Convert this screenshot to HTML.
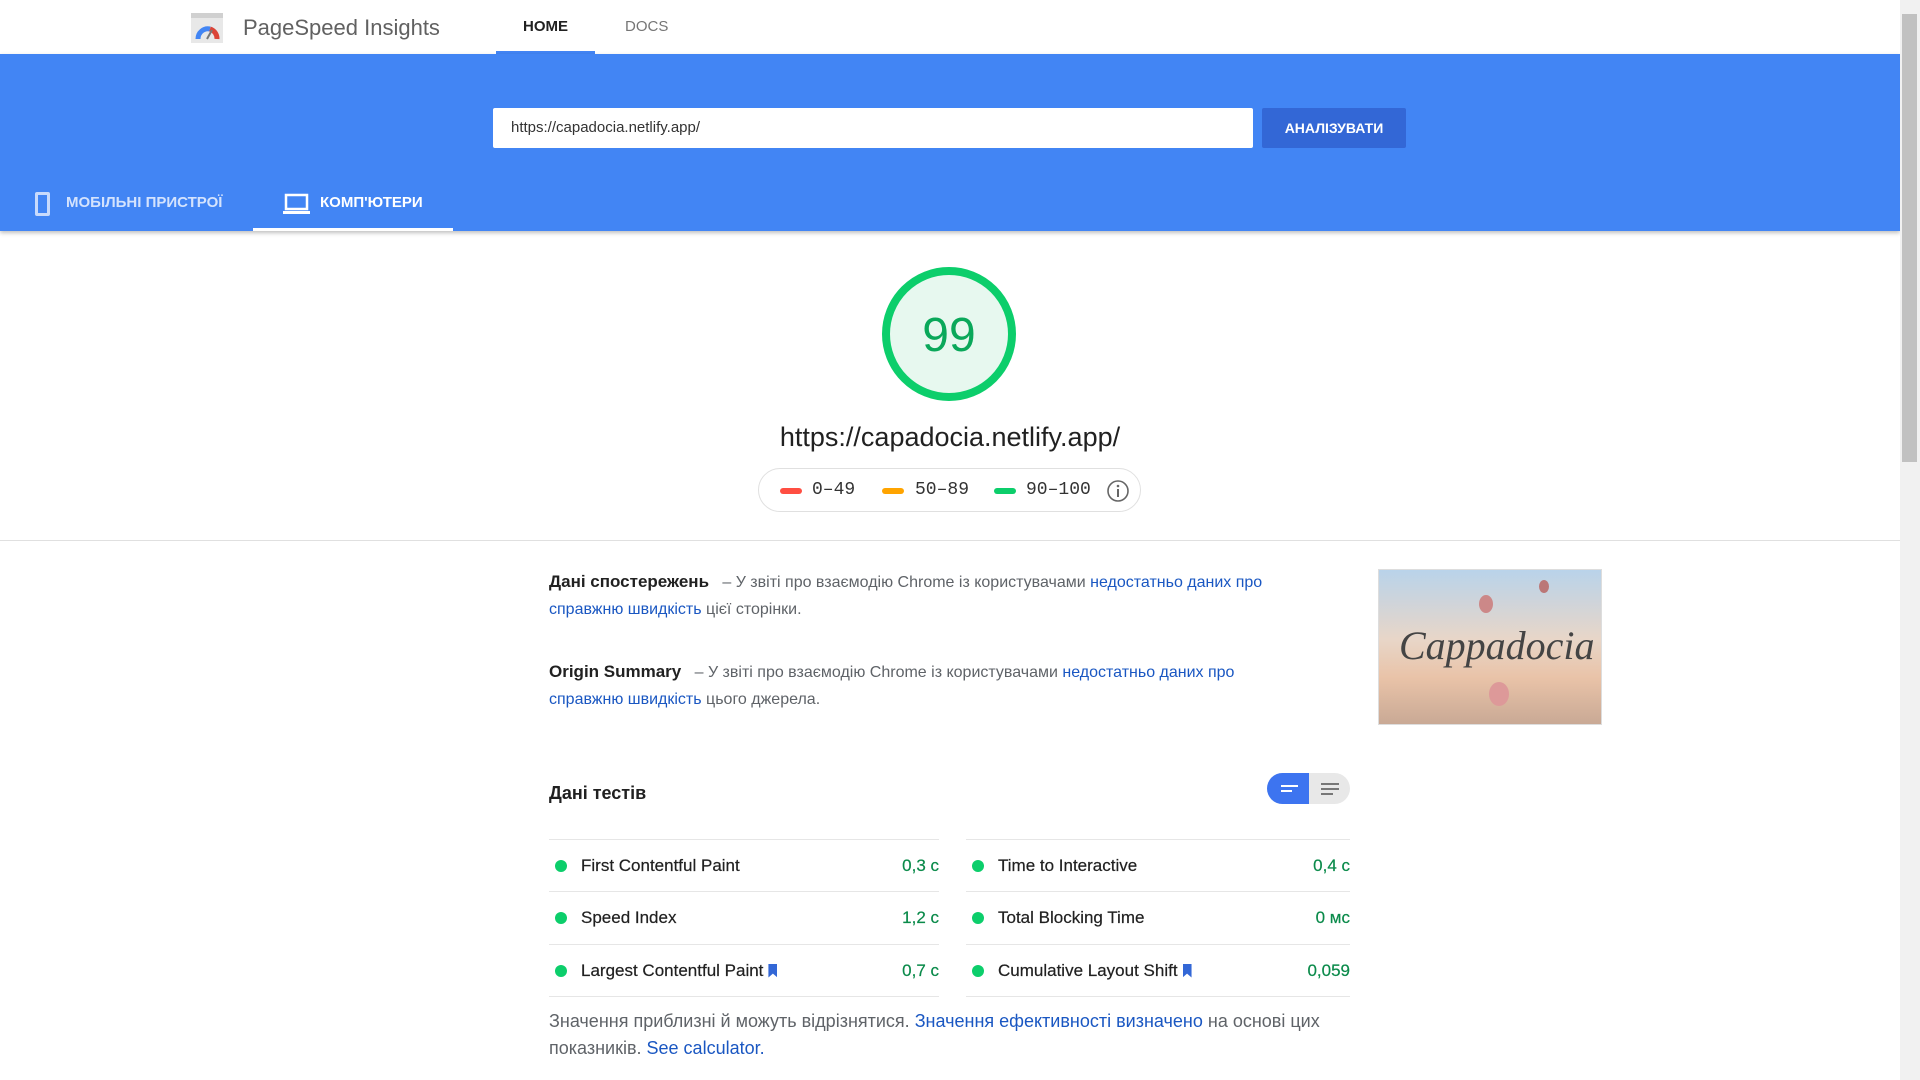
<!DOCTYPE html>
<html><head><meta charset="utf-8">
<style>
*{box-sizing:border-box;margin:0;padding:0}
body{width:1920px;height:1080px;overflow:hidden;background:#fff;font-family:"Liberation Sans",Arial,sans-serif;color:#212121;position:relative}
.abs{position:absolute}
.header{left:0;top:0;width:1900px;height:54px;background:#fff}
.band{left:0;top:54px;width:1900px;height:177px;background:#4285f4;box-shadow:0 2px 4px rgba(0,0,0,.25)}
.link{color:#1a57c2}
.gray{color:#5f6368}
.row{position:absolute;height:52px;border-top:1px solid #e6e6e6;display:flex;align-items:center;font-size:17px;-webkit-text-stroke:0.2px #212121}
.dot{width:12px;height:12px;border-radius:50%;background:#0cce6b;margin:0 14px 0 6px}
.val{margin-left:auto;color:#0a8a4a;font-size:17px;-webkit-text-stroke:0.2px #0a8a4a}
.bm{display:inline-block;width:9px;height:14px;background:#3367d6;margin-left:5px;clip-path:polygon(0 0,100% 0,100% 100%,50% 72%,0 100%)}
</style></head><body>
<div class="abs header"></div>
<svg class="abs" style="left:190px;top:12px" width="34" height="32" viewBox="0 0 34 32">
<rect x="1" y="1" width="32" height="30" fill="#e8e8e8"/><rect x="1" y="1" width="32" height="5" fill="#d0d0d0"/>
<path d="M8 27 A10 10 0 0 1 20 17" stroke="#4285f4" stroke-width="5" fill="none"/>
<path d="M20 17 A10 10 0 0 1 27 27" stroke="#db4437" stroke-width="5" fill="none"/>
<line x1="17" y1="27" x2="22" y2="18" stroke="#777" stroke-width="2"/></svg>
<div class="abs" style="left:243px;top:15px;font-size:22px;color:#616161">PageSpeed Insights</div>
<div class="abs" style="left:523px;top:18px;font-size:15px;font-weight:bold;color:#212121">HOME</div>
<div class="abs" style="left:496px;top:51px;width:99px;height:3px;background:#4285f4"></div>
<div class="abs" style="left:625px;top:18px;font-size:15px;color:#757575">DOCS</div>
<div class="abs band"></div>
<div class="abs" style="left:493px;top:108px;width:760px;height:40px;background:#fff;border-radius:2px;font-size:15px;padding:11px 18px;color:#333">https://capadocia.netlify.app/</div>
<div class="abs" style="left:1262px;top:108px;width:144px;height:40px;background:#3367d6;color:#fff;font-weight:bold;font-size:14px;text-align:center;line-height:40px;border-radius:2px">АНАЛІЗУВАТИ</div>
<div class="abs" style="left:35px;top:192px;width:15px;height:24px;border:3px solid #c8dafc;border-radius:2px"></div>
<div class="abs" style="left:66px;top:194px;font-size:15px;font-weight:bold;color:#d4e3fd">МОБІЛЬНІ ПРИСТРОЇ</div>
<svg class="abs" style="left:283px;top:193px" width="27" height="22" viewBox="0 0 27 22"><rect x="3" y="2" width="21" height="14" fill="none" stroke="#fff" stroke-width="2.5"/><rect x="0" y="18" width="27" height="3" fill="#fff"/></svg>
<div class="abs" style="left:320px;top:194px;font-size:15px;font-weight:bold;color:#fff">КОМП'ЮТЕРИ</div>
<div class="abs" style="left:253px;top:228px;width:200px;height:3px;background:#fff"></div>
<svg class="abs" style="left:879px;top:264px" width="140" height="140"><circle cx="70" cy="70" r="63" fill="#e7f8ef" stroke="#0cce6b" stroke-width="8"/><text x="70" y="87" text-anchor="middle" font-family="Liberation Sans, sans-serif" font-size="48" fill="#0aa85a">99</text></svg>
<div class="abs" style="left:700px;top:422px;width:500px;text-align:center;font-size:27px;color:#212121">https://capadocia.netlify.app/</div>
<div class="abs" style="left:758px;top:468px;width:383px;height:44px;border:1px solid #e0e0e0;border-radius:22px"></div>
<div class="abs" style="left:780px;top:488px;width:22px;height:6px;border-radius:3px;background:#ff4e42"></div>
<div class="abs" style="left:812px;top:480px;font-family:'Liberation Mono',monospace;font-size:18px;color:#333">0–49</div>
<div class="abs" style="left:882px;top:488px;width:22px;height:6px;border-radius:3px;background:#ffa400"></div>
<div class="abs" style="left:915px;top:480px;font-family:'Liberation Mono',monospace;font-size:18px;color:#333">50–89</div>
<div class="abs" style="left:994px;top:488px;width:22px;height:6px;border-radius:3px;background:#0cce6b"></div>
<div class="abs" style="left:1026px;top:480px;font-family:'Liberation Mono',monospace;font-size:18px;color:#333">90–100</div>
<svg class="abs" style="left:1106px;top:479px" width="24" height="24"><circle cx="12" cy="12" r="10" fill="none" stroke="#666" stroke-width="1.6"/><rect x="11" y="10" width="2" height="8" fill="#666"/><circle cx="12" cy="7" r="1.3" fill="#666"/></svg>
<div class="abs" style="left:0;top:540px;width:1900px;height:1px;background:#e0e0e0"></div>
<div class="abs" style="left:549px;top:568px;width:740px;font-size:16px;line-height:27px;color:#5f6368"><b style="color:#212121;font-size:17px">Дані спостережень</b>&nbsp;&nbsp; – У звіті про взаємодію Chrome із користувачами <span class="link">недостатньо даних про справжню швидкість</span> цієї сторінки.</div>
<div class="abs" style="left:549px;top:658px;width:710px;font-size:16px;line-height:27px;color:#5f6368"><b style="color:#212121;font-size:17px">Origin Summary</b>&nbsp;&nbsp; – У звіті про взаємодію Chrome із користувачами <span class="link">недостатньо даних про справжню швидкість</span> цього джерела.</div>
<div class="abs" style="left:1378px;top:569px;width:224px;height:156px;background:linear-gradient(180deg,#b9d3ea 0%,#e8d6c8 45%,#e9c3a8 70%,#c9a995 100%);border:1px solid #ddd">
<div style="position:absolute;left:20px;top:52px;font-family:'Liberation Serif',serif;font-style:italic;font-size:40px;color:#444">Cappadocia</div>
<div style="position:absolute;left:100px;top:25px;width:14px;height:18px;border-radius:50%;background:#c88"></div>
<div style="position:absolute;left:160px;top:10px;width:10px;height:13px;border-radius:50%;background:#b77"></div>
<div style="position:absolute;left:110px;top:112px;width:20px;height:24px;border-radius:50%;background:#d99"></div></div>
<div class="abs" style="left:549px;top:783px;font-size:18px;font-weight:bold">Дані тестів</div>
<div class="abs" style="left:1267px;top:773px;width:83px;height:31px;border-radius:16px;background:#e8e8e8;overflow:hidden">
<div style="position:absolute;left:0;top:0;width:42px;height:31px;background:#3d74f0"></div>
<div style="position:absolute;left:14px;top:12px;width:17px;height:2px;background:#fff"></div><div style="position:absolute;left:14px;top:17px;width:11px;height:2px;background:#fff"></div>
<div style="position:absolute;left:54px;top:10px;width:18px;height:2px;background:#777"></div><div style="position:absolute;left:54px;top:15px;width:18px;height:2px;background:#777"></div><div style="position:absolute;left:54px;top:20px;width:12px;height:2px;background:#777"></div></div>
<div class="row" style="left:549px;top:839px;width:390px"><span class="dot"></span>First Contentful Paint<span class="val">0,3 с</span></div>
<div class="row" style="left:549px;top:891px;width:390px"><span class="dot"></span>Speed Index<span class="val">1,2 с</span></div>
<div class="row" style="left:549px;top:944px;width:390px;border-bottom:1px solid #e6e6e6;height:53px"><span class="dot"></span>Largest Contentful Paint<span class="bm"></span><span class="val">0,7 с</span></div>
<div class="row" style="left:966px;top:839px;width:384px"><span class="dot"></span>Time to Interactive<span class="val">0,4 с</span></div>
<div class="row" style="left:966px;top:891px;width:384px"><span class="dot"></span>Total Blocking Time<span class="val">0 мс</span></div>
<div class="row" style="left:966px;top:944px;width:384px;border-bottom:1px solid #e6e6e6;height:53px"><span class="dot"></span>Cumulative Layout Shift<span class="bm"></span><span class="val">0,059</span></div>
<div class="abs gray" style="left:549px;top:1008px;width:805px;font-size:18px;line-height:27px">Значення приблизні й можуть відрізнятися. <span class="link">Значення ефективності визначено</span> на основі цих показників. <span class="link">See calculator.</span></div>
<div class="abs" style="left:1900px;top:0;width:20px;height:1080px;background:#f1f1f1"></div>
<div class="abs" style="left:1902px;top:14px;width:15px;height:448px;background:#c1c1c1"></div>
</body></html>
